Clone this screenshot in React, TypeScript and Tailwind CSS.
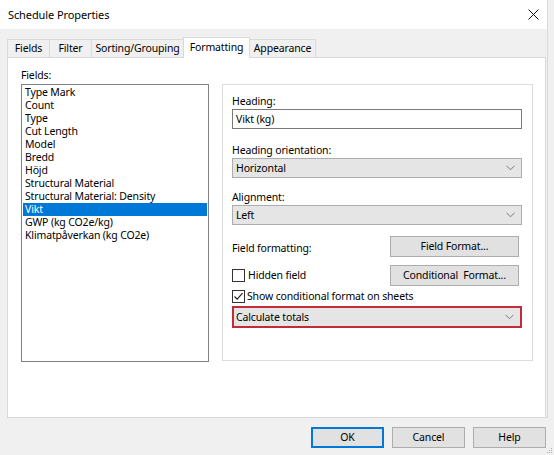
import React from "react";

const font = { fontFamily: '"Noto Sans", "Open Sans", sans-serif' };

function Chevron() {
  return (
    <svg width="9" height="6" viewBox="0 0 9 6" className="mr-[6px]">
      <path d="M0.5 0.8 L4.5 4.8 L8.5 0.8" fill="none" stroke="#7a7a7a" strokeWidth="1" />
    </svg>
  );
}

function Select({ value, red }: { value: string; red?: boolean }) {
  return (
    <div
      className={
        red
          ? "flex h-[22px] items-center justify-between border-2 border-[#c42b3a] bg-[#e5e5e5] pl-[2px]"
          : "flex h-[20px] items-center justify-between border border-[#adadad] bg-[#e5e5e5] pl-[3px]"
      }
    >
      <span>{value}</span>
      <Chevron />
    </div>
  );
}

function Btn({ label, w, primary }: { label: string; w: string; primary?: boolean }) {
  return (
    <div
      className={
        (primary
          ? "border-2 border-[#0078d7] "
          : "border border-[#adadad] ") +
        "flex h-[21px] items-center justify-center whitespace-pre bg-[#e1e1e1] " +
        w
      }
    >
      {label}
    </div>
  );
}

function Check({ checked }: { checked?: boolean }) {
  return (
    <div className="flex h-[13px] w-[13px] items-center justify-center border border-[#333333] bg-white">
      {checked && (
        <svg width="11" height="11" viewBox="0 0 11 11">
          <path d="M1.5 5.5 L4.2 8.2 L9.5 2.2" fill="none" stroke="#222" strokeWidth="1.2" />
        </svg>
      )}
    </div>
  );
}

const items = [
  "Type Mark",
  "Count",
  "Type",
  "Cut Length",
  "Model",
  "Bredd",
  "Höjd",
  "Structural Material",
  "Structural Material: Density",
  "Vikt",
  "GWP (kg CO2e/kg)",
  "Klimatpåverkan (kg CO2e)",
];

export default function App() {
  return (
    <div
      className="flex h-[455px] w-[554px] overflow-hidden bg-[#f0f0f0] text-[10.5px] leading-[15px] tracking-[-0.15px] text-black"
      style={font}
    >
      <div className="flex w-[547px] flex-col">
        {/* title bar */}
        <div className="flex h-[29px] items-center justify-between bg-white pl-[8px] pr-[8px]">
          <span className="text-[11px] tracking-[-0.1px]">Schedule Properties</span>
          <svg width="11" height="11" viewBox="0 0 11 11">
            <path d="M0.5 0.5 L10.5 10.5 M10.5 0.5 L0.5 10.5" stroke="#111" strokeWidth="1" />
          </svg>
        </div>

        {/* tabs */}
        <div className="relative z-10 mt-[8px] flex h-[20px] items-end whitespace-nowrap pl-[7px]">
          <div className="flex h-[18px] w-[42px] items-center justify-center border-l border-t border-[#d9d9d9]">Fields</div>
          <div className="flex h-[18px] w-[42px] items-center justify-center border-l border-t border-[#d9d9d9]">Filter</div>
          <div className="flex h-[18px] w-[92px] items-center justify-center border-l border-t border-[#d9d9d9]">Sorting/Grouping</div>
          <div className="-mb-px flex h-[21px] w-[67px] items-center justify-center border-l border-r border-t border-[#d9d9d9] bg-white pb-[2px]">
            Formatting
          </div>
          <div className="flex h-[18px] w-[66px] items-center justify-center border-r border-t border-[#d9d9d9]">Appearance</div>
        </div>

        {/* panel */}
        <div className="ml-[7px] h-[361px] w-[539px] border border-[#d9d9d9] bg-white pl-[13px] pt-[10px]">
          <div className="flex gap-[13px]">
            <div className="flex flex-col">
              <div className="h-[16px]">Fields:</div>
              <div className="h-[278px] w-[188px] border border-[#828282] px-px pt-px">
                {items.map((it) => (
                  <div
                    key={it}
                    className={
                      "h-[13px] whitespace-nowrap pl-[2px] leading-[13px] " +
                      (it === "Vikt" ? "bg-[#0078d7] text-white" : "")
                    }
                  >
                    {it}
                  </div>
                ))}
              </div>
            </div>

            <div className="mt-[16px] h-[277px] w-[311px] border border-[#dcdcdc] pl-[9px] pr-[10px] pt-[9px]">
              <div className="h-[15px]">Heading:</div>
              <div className="flex h-[20px] items-center border border-[#7a7a7a] bg-white pl-[3px]">Vikt (kg)</div>

              <div className="mt-[14px] h-[15px]">Heading orientation:</div>
              <Select value="Horizontal" />

              <div className="mt-[12px] h-[15px]">Alignment:</div>
              <Select value="Left" />

              <div className="mt-[11px] flex items-center justify-between pr-[3px]">
                <span className="pt-[3px]">Field formatting:</span>
                <Btn label="Field Format..." w="w-[129px]" />
              </div>

              <div className="mt-[8px] flex items-center justify-between pr-[3px]">
                <div className="flex items-center gap-[3px]">
                  <Check />
                  <span>Hidden field</span>
                </div>
                <Btn label="Conditional  Format..." w="w-[129px]" />
              </div>

              <div className="mt-[3px] flex h-[15px] items-center gap-[2px]">
                <Check checked />
                <span>Show conditional format on sheets</span>
              </div>

              <div className="mt-[2px]">
                <Select value="Calculate totals" red />
              </div>
            </div>
          </div>
        </div>

        {/* bottom buttons */}
        <div className="mt-[9px] flex justify-end gap-[8px] pr-[1px]">
          <Btn label="OK" w="w-[73px]" primary />
          <Btn label="Cancel" w="w-[73px]" />
          <Btn label="Help" w="w-[73px]" />
        </div>
      </div>
      <div className="h-[418px] w-px bg-[#dadada]" />
      <div className="relative flex-1">
        <svg className="absolute bottom-[1px] right-[1px]" width="6" height="6" viewBox="0 0 6 6">
          <rect x="4" y="0" width="1" height="1" fill="#b0b0b0" />
          <rect x="2" y="2" width="1" height="1" fill="#b0b0b0" />
          <rect x="4" y="2" width="1" height="1" fill="#b0b0b0" />
          <rect x="0" y="4" width="1" height="1" fill="#b0b0b0" />
          <rect x="2" y="4" width="1" height="1" fill="#b0b0b0" />
          <rect x="4" y="4" width="1" height="1" fill="#b0b0b0" />
        </svg>
      </div>
    </div>
  );
}
